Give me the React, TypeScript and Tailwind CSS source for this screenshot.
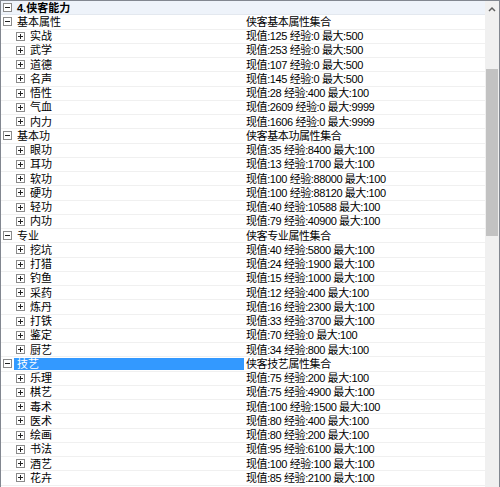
type Item = { name: string; cur: number; exp: number; max: number }
type Group = { name: string; desc: string; items: Item[]; selected?: boolean }

const mk = (name: string, cur: number, exp: number, max: number): Item => ({ name, cur, exp, max })

const groups: Group[] = [
  {
    name: '基本属性',
    desc: '侠客基本属性集合',
    items: [
      mk('实战', 125, 0, 500),
      mk('武学', 253, 0, 500),
      mk('道德', 107, 0, 500),
      mk('名声', 145, 0, 500),
      mk('悟性', 28, 400, 100),
      mk('气血', 2609, 0, 9999),
      mk('内力', 1606, 0, 9999),
    ],
  },
  {
    name: '基本功',
    desc: '侠客基本功属性集合',
    items: [
      mk('眼功', 35, 8400, 100),
      mk('耳功', 13, 1700, 100),
      mk('软功', 100, 88000, 100),
      mk('硬功', 100, 88120, 100),
      mk('轻功', 40, 10588, 100),
      mk('内功', 79, 40900, 100),
    ],
  },
  {
    name: '专业',
    desc: '侠客专业属性集合',
    items: [
      mk('挖坑', 40, 5800, 100),
      mk('打猎', 24, 1900, 100),
      mk('钓鱼', 15, 1000, 100),
      mk('采药', 12, 400, 100),
      mk('炼丹', 16, 2300, 100),
      mk('打铁', 33, 3700, 100),
      mk('鉴定', 70, 0, 100),
      mk('厨艺', 34, 800, 100),
    ],
  },
  {
    name: '技艺',
    desc: '侠客技艺属性集合',
    selected: true,
    items: [
      mk('乐理', 75, 200, 100),
      mk('棋艺', 75, 4900, 100),
      mk('毒术', 100, 1500, 100),
      mk('医术', 80, 400, 100),
      mk('绘画', 80, 200, 100),
      mk('书法', 95, 6100, 100),
      mk('酒艺', 100, 100, 100),
      mk('花卉', 85, 2100, 100),
    ],
  },
]

function Toggle({ open }: { open: boolean }) {
  return (
    <span className="relative flex h-[9px] w-[9px] shrink-0 items-center justify-center border border-[#8a8a8a] bg-white">
      <span className="h-px w-[5px] bg-[#222]" />
      {!open && <span className="absolute h-[5px] w-px bg-[#222]" />}
    </span>
  )
}

function Row({ children, value }: { children: React.ReactNode; value?: string }) {
  return (
    <div className="flex h-[14.25px] items-center border-b border-[#f0f0f0]">
      <div className="flex h-full w-[243px] shrink-0 items-center">{children}</div>
      <div className="pl-[2px] whitespace-nowrap tracking-[-0.4px]">{value}</div>
    </div>
  )
}

export default function App() {
  return (
    <div
      className="flex h-[487px] w-[500px] overflow-hidden border-t border-l border-r border-[#828790] bg-white text-[11px] leading-[14px] text-black"
      style={{ fontFamily: '"Liberation Sans", "Noto Sans CJK SC", sans-serif' }}
    >
      <div className="flex-1 overflow-hidden">
        <div className="flex h-[14.25px] items-center border-b border-[#e3e8ef] bg-[#eef3fa] pl-[2px] font-bold">
          <Toggle open />
          <span className="ml-[5px]">4.侠客能力</span>
        </div>
        {groups.map((g) => (
          <div key={g.name}>
            <Row value={g.desc}>
              <span className="ml-[2px]">
                <Toggle open />
              </span>
              <span
                className={
                  g.selected
                    ? 'ml-[2px] flex h-[12px] flex-1 items-center bg-[#3399ff] pl-[3px] text-white'
                    : 'ml-[5px]'
                }
              >
                {g.name}
              </span>
            </Row>
            {g.items.map((it) => (
              <Row key={it.name} value={`现值:${it.cur} 经验:${it.exp} 最大:${it.max}`}>
                <span className="ml-[15px]">
                  <Toggle open={false} />
                </span>
                <span className="ml-[5px]">{it.name}</span>
              </Row>
            ))}
          </div>
        ))}
      </div>
      <div className="relative w-[14px] shrink-0 bg-[#f0f0f0]">
        <svg className="absolute left-[3px] top-[5px]" width="8" height="6" viewBox="0 0 8 6">
          <path d="M1 5 L4 2 L7 5" fill="none" stroke="#606060" strokeWidth="1.5" />
        </svg>
        <div className="absolute left-px right-px top-[68px] h-[167px] bg-[#c2c2c2]" />
      </div>
    </div>
  )
}
